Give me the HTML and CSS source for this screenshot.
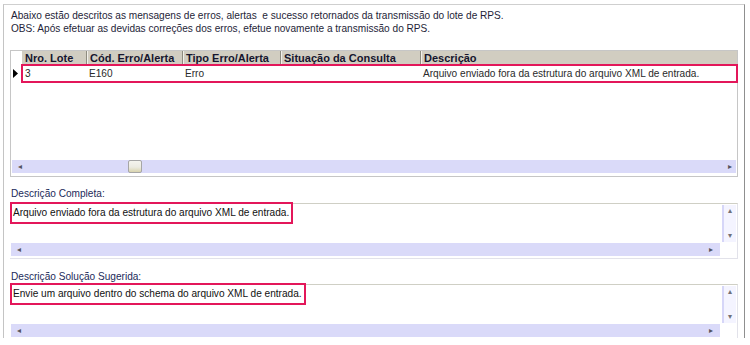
FILE: index.html
```html
<!DOCTYPE html>
<html lang="pt-BR">
<head>
<meta charset="utf-8">
<title>Mensagens do lote de RPS</title>
<link rel="stylesheet" href="styles.css">
</head>
<body>
<div class="frame">
  <p class="intro">Abaixo estão descritos as mensagens de erros, alertas&nbsp; e sucesso retornados da transmissão do lote de RPS.<br>OBS: Após efetuar as devidas correções dos erros, efetue novamente a transmissão do RPS.</p>

  <div class="grid">
    <div class="grid-head">
      <div class="rh"></div>
      <div class="hc c1">Nro. Lote</div>
      <div class="hc c2">Cód. Erro/Alerta</div>
      <div class="hc c3">Tipo Erro/Alerta</div>
      <div class="hc c4">Situação da Consulta</div>
      <div class="hc c5">Descrição</div>
    </div>
    <div class="grid-row">
      <div class="rh"><svg class="ptr" width="5" height="9" viewBox="0 0 5 9"><path d="M0 0 L5 4.5 L0 9 Z" fill="#000"/></svg></div>
      <div class="cells mark">
        <div class="dc c1">3</div>
        <div class="dc c2">E160</div>
        <div class="dc c3">Erro</div>
        <div class="dc c4"></div>
        <div class="dc c5">Arquivo enviado fora da estrutura do arquivo XML de entrada.</div>
      </div>
    </div>
    <div class="grid-body"></div>
    <div class="hscroll grid-scroll">
      <span class="arr">&#9666;</span>
      <div class="track"><div class="thumb"></div></div>
      <span class="arr">&#9656;</span>
    </div>
  </div>

  <div class="label label-a">Descrição Completa:</div>
  <div class="memo">
    <div class="memo-main">
      <div class="memo-text"><span class="mark text-mark">Arquivo enviado fora da estrutura do arquivo XML de entrada.</span></div>
      <div class="vscroll"><span class="varr">&#9652;</span><span class="varr">&#9662;</span></div>
    </div>
    <div class="memo-bottom">
      <div class="hscroll memo-scroll"><span class="arr">&#9666;</span><div class="track"></div><span class="arr">&#9656;</span></div>
      <div class="corner"></div>
    </div>
  </div>

  <div class="label label-b">Descrição Solução Sugerida:</div>
  <div class="memo">
    <div class="memo-main">
      <div class="memo-text"><span class="mark text-mark">Envie um arquivo dentro do schema do arquivo XML de entrada.</span></div>
      <div class="vscroll"><span class="varr">&#9652;</span><span class="varr">&#9662;</span></div>
    </div>
    <div class="memo-bottom">
      <div class="hscroll memo-scroll"><span class="arr">&#9666;</span><div class="track"></div><span class="arr">&#9656;</span></div>
      <div class="corner"></div>
    </div>
  </div>
</div>
</body>
</html>
```

FILE: styles.css
```css
html, body {
  margin: 0;
  padding: 0;
  background: #ffffff;
}

body {
  font-family: "Liberation Sans", Arial, sans-serif;
  font-size: 10.1px;
  color: #222233;
}

.frame {
  box-sizing: border-box;
  margin: 4px 0 0 3px;
  width: 742px;
  height: 334px;
  border-top: 1px solid #cfcfcf;
  border-left: 1px solid #c4c4c4;
  border-right: 1px solid #8f8f8f;
  padding: 4px 6px 0 6px;
  overflow: hidden;
}

.intro {
  margin: 0 0 0 1px;
  line-height: 13px;
  color: #1e1e38;
}

/* grid */
.grid {
  box-sizing: border-box;
  margin-top: 15px;
  width: 728px;
  height: 127px;
  border: 1px solid #c6c6c6;
  display: flex;
  flex-direction: column;
  padding-bottom: 3px;
}

.grid-head {
  display: flex;
  height: 14px;
  flex: none;
}

.grid-head .rh {
  width: 11px;
  flex: none;
  background: #ffffff;
}

.hc {
  box-sizing: border-box;
  background: #d1cdc1;
  border-left: 1px solid #8e8c80;
  box-shadow: inset 1px 0 0 #f2f0ea;
  font-weight: bold;
  font-size: 11px;
  line-height: 14px;
  padding-left: 3px;
  color: #16162e;
  white-space: nowrap;
  overflow: hidden;
}

.grid-head .c1 { border-left: none; box-shadow: none; }

.c1 { width: 64px; }
.c2 { width: 96px; }
.c3 { width: 98px; }
.c4 { width: 140px; }
.c5 { flex: 1; }

.grid-row {
  display: flex;
  height: 17px;
  flex: none;
}

.grid-row .rh {
  width: 11px;
  flex: none;
  display: flex;
  align-items: center;
  justify-content: flex-start;
  padding-left: 2px;
  box-sizing: border-box;
}

.ptr { display: block; }

.cells {
  flex: 1;
  display: flex;
}

.mark {
  outline: 2px solid #e3175a;
}

.cells.mark {
  outline-offset: -1px;
}

.dc {
  box-sizing: border-box;
  line-height: 17px;
  padding-left: 3px;
  color: #2a2a2a;
  white-space: nowrap;
  overflow: hidden;
}

.grid-body {
  flex: 1;
}

/* scrollbars */
.hscroll {
  display: flex;
  align-items: center;
  height: 13px;
  background: #dadaf9;
  color: #555560;
  font-size: 8px;
}

.arr {
  width: 12px;
  text-align: center;
  line-height: 13px;
  flex: none;
}

.track {
  flex: 1;
  height: 13px;
  display: flex;
  align-items: center;
}

.grid-scroll {
  margin: 0 1px;
  flex: none;
  padding-left: 2px;
}

.thumb {
  box-sizing: border-box;
  margin-left: 102px;
  width: 14px;
  height: 13px;
  border: 1px solid #a6a6a6;
  border-radius: 2px;
  background: linear-gradient(#f4f4ee 0%, #ecebe2 55%, #d9d4ae 100%);
}

/* labels */
.label {
  margin-left: 1px;
  line-height: 13px;
  color: #1c2a5a;
}

.label-a { margin-top: 10px; margin-bottom: 3px; }
.label-b { margin-top: 11px; margin-bottom: 1px; }

/* memo */
.memo {
  box-sizing: border-box;
  width: 728px;
  border-top: 1px solid #cfcfc5;
  border-right: 1px solid #e2e2ea;
  border-bottom: 1px solid #e2e2ea;
  padding-bottom: 2px;
}

.memo-main {
  display: flex;
  height: 39px;
}

.memo-text {
  flex: 1;
  padding: 0 0 0 2px;
}

.text-mark {
  display: inline-block;
  padding: 2px 2px 3px 1px;
  line-height: 13px;
  color: #111111;
  outline-offset: 0;
}

.vscroll {
  box-sizing: border-box;
  width: 14px;
  margin-right: 1px;
  margin-top: 1px;
  height: 37px;
  border-left: 2px solid #d6d6f8;
  background: #f4f4ff;
  display: flex;
  flex-direction: column;
  justify-content: space-between;
  align-items: center;
  color: #707078;
  font-size: 8px;
  line-height: 12px;
}

.memo-bottom {
  display: flex;
  height: 13px;
}

.memo-scroll {
  flex: 1;
  margin-left: 1px;
  padding-left: 2px;
}

.memo-scroll .arr:last-child {
  margin-right: 3px;
}

.corner {
  width: 17px;
  flex: none;
  background: #ffffff;
}
```
